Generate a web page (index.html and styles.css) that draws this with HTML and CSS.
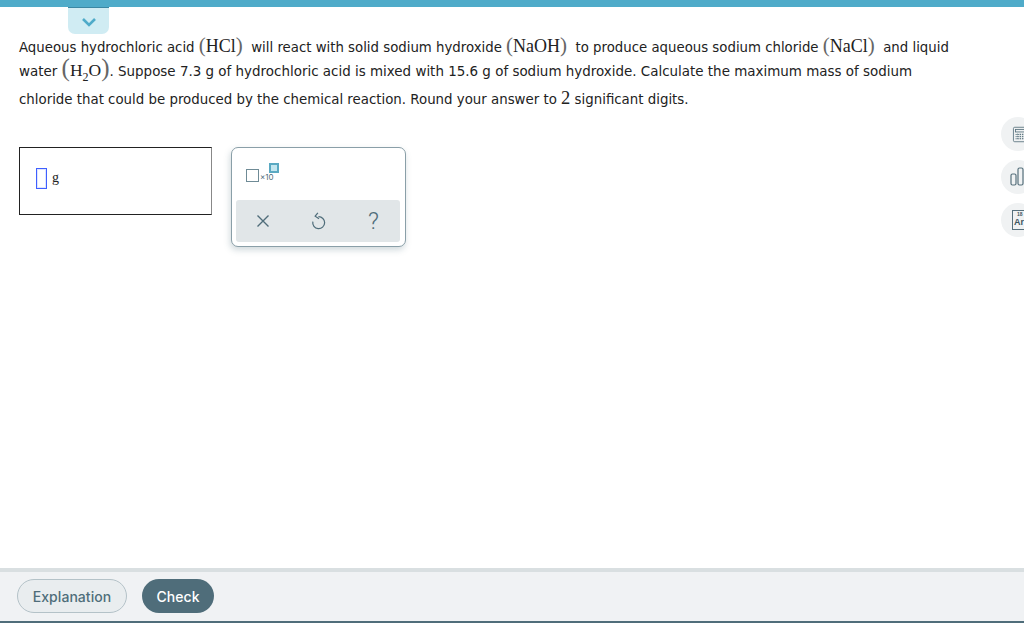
FILE: index.html
```html
<!DOCTYPE html>
<html>
<head>
    <title>Limiting reactant</title>
    <link rel="stylesheet" href="styles.css">
</head>
<body>
    <div class="topbar"></div>
    <div class="tab">
        <svg width="16" height="10" viewBox="0 0 16 10"><path d="M2 2l6 6 6-6" fill="none" stroke="#4fabc9" stroke-width="2.6"/></svg>
    </div>
    <main class="content">
        <div class="question">
            <p class="line line-one">Aqueous hydrochloric acid <span class="math paren">(</span><span class="math">HCl</span><span class="math paren">)</span> &nbsp;will react with solid sodium hydroxide <span class="math paren">(</span><span class="math">NaOH</span><span class="math paren">)</span> &nbsp;to produce aqueous sodium chloride <span class="math paren">(</span><span class="math">NaCl</span><span class="math paren">)</span> &nbsp;and liquid</p>
            <p class="line line-two">water <span class="math paren big">(</span><span class="math">H<sub>2</sub>O</span><span class="math paren big">)</span>. Suppose 7.3 g of hydrochloric acid is mixed with 15.6 g of sodium hydroxide. Calculate the maximum mass of sodium</p>
            <p class="line line-three">chloride that could be produced by the chemical reaction. Round your answer to <span class="math">2</span> significant digits.</p>
        </div>
        <div class="workspace">
            <div class="answer">
                <span class="cursor"></span>
                <span class="unit">g</span>
            </div>
            <div class="palette">
                <div class="palette-top">
                    <span class="box"></span>
                    <span class="times">×10</span>
                    <span class="exp"></span>
                </div>
                <div class="palette-actions">
                    <svg width="14" height="14" viewBox="0 0 14 14"><path d="M1.5 1.5l11 11M12.5 1.5l-11 11" fill="none" stroke="#4f6d7a" stroke-width="1.4"/></svg>
                    <svg width="16" height="18" viewBox="0 0 14 16"><path d="M6.500 4.200a5.300 5.300 0 1 1-5 4.400M6 .8L3.600 3.700 7 6" fill="none" stroke="#4f6d7a" stroke-width="1.1"/></svg>
                    <span class="help">?</span>
                </div>
            </div>
        </div>
    </main>
    <div class="tools">
        <div class="tool">
            <svg width="19" height="17" viewBox="0 0 22 20"><g fill="none" stroke="#56707c"><rect x="1.5" y="1.5" width="19" height="17" rx="1.5"/><rect x="4" y="4" width="14" height="3"/><path d="M4 10h14M4 12.500h14M4 15h14M6.500 9v7M9.500 9v7M12.500 9v7M15.500 9v7" stroke-dasharray="1.500 1"/></g></svg>
        </div>
        <div class="tool tool-chart">
            <svg width="22" height="20" viewBox="0 0 22 20"><g fill="none" stroke="#56707c" stroke-width="1.200"><rect x="1" y="7" width="5" height="11" rx="1.500"/><rect x="8" y="1" width="5" height="17" rx="1.500"/><rect x="15" y="10" width="5" height="8" rx="1.500"/></g></svg>
        </div>
        <div class="tool">
            <div class="element"><span class="element-top">18</span>Ar</div>
        </div>
    </div>
    <footer class="footer">
        <button class="btn btn-light">Explanation</button>
        <button class="btn btn-dark">Check</button>
    </footer>
</body>
</html>
```
FILE: styles.css
```css
html, body {
    height: 100%;
}

body {
    margin: 0;
    height: 623px;
    overflow: hidden;
    display: flex;
    flex-direction: column;
    position: relative;
    background: white;
    font-family: "DejaVu Sans", Verdana, sans-serif;
    font-size: 13.3px;
    color: #222;
}

.topbar {
    height: 7px;
    background: #4fabc9;
    flex-shrink: 0;
}

.tab {
    position: absolute;
    top: 7px;
    left: 68px;
    width: 41px;
    height: 27px;
    background: #d0ecf3;
    border-top: 1px solid #3b87a3;
    border-radius: 0 0 7px 7px;
    box-sizing: border-box;
    text-align: center;
    padding-top: 9px;
}

.tab svg {
    display: block;
    margin: 0 auto;
}

.content {
    flex: 1;
    padding: 29px 0 0 19px;
}

.question {
    width: 960px;
}

.line {
    margin: 0;
    white-space: nowrap;
}

.line-one {
    height: 24px;
    line-height: 23px;
}

.line-two {
    height: 28px;
    line-height: 23px;
    font-size: 13.45px;
}

.line-three {
    height: 25px;
    line-height: 23px;
    font-size: 13.35px;
}

.math {
    font-family: "Liberation Serif", "Times New Roman", serif;
    font-size: 18px;
    line-height: 0;
    color: #222;
}

.line-two .math {
    font-size: 17.5px;
}

.line-three .math {
    font-size: 18.5px;
}

.math sub {
    font-size: 12px;
    line-height: 0;
}

.paren {
    font-size: 21px;
    font-weight: 400;
    color: #666;
}

.line-two .paren.big {
    font-size: 25px;
}

.workspace {
    display: flex;
    align-items: flex-start;
    gap: 19px;
    margin-top: 34px;
}

.answer {
    width: 193px;
    height: 68px;
    box-sizing: border-box;
    border: 1px solid #222;
    border-right-color: #888;
    display: flex;
    align-items: center;
    padding: 0 0 6px 16px;
    gap: 5px;
}

.cursor {
    width: 9px;
    height: 19px;
    border: 1px solid #3f5fff;
    outline: 1px solid #dfe5ff;
    outline-offset: -2px;
}

.unit {
    font-family: "Liberation Serif", serif;
    font-size: 14px;
}

.palette {
    width: 175px;
    height: 100px;
    box-sizing: border-box;
    border: 1px solid #8a9fa8;
    border-radius: 7px;
    background: white;
    box-shadow: -1px 3px 6px rgba(100, 130, 140, 0.3);
    padding: 0 5px 4px 4px;
    display: flex;
    flex-direction: column;
    justify-content: space-between;
}

.palette-top {
    position: relative;
    height: 50px;
}

.box {
    position: absolute;
    left: 10px;
    top: 21px;
    width: 11px;
    height: 11px;
    border: 1px solid #6f8b96;
}

.times {
    position: absolute;
    left: 24px;
    top: 24px;
    font-family: "Inter", sans-serif;
    font-size: 8px;
    color: #4f6d7a;
}

.exp {
    position: absolute;
    left: 33px;
    top: 15px;
    width: 6px;
    height: 6px;
    background: #c3e6ef;
    border: 2px solid #5aa9c2;
}

.palette-actions {
    height: 42px;
    background: #e1e6e8;
    border-radius: 3px;
    display: flex;
    align-items: center;
    justify-content: space-between;
    padding: 0 21px 0 20px;
}

.help {
    font-family: "Roboto", sans-serif;
    font-size: 24px;
    color: #4f6d7a;
    font-weight: 300;
}

.tools {
    position: absolute;
    top: 117px;
    left: 1001px;
    width: 34px;
    display: flex;
    flex-direction: column;
    gap: 9px;
}

.tool {
    width: 34px;
    height: 34px;
    box-sizing: border-box;
    padding-left: 11px;
    border-radius: 50%;
    background: #f0f2f3;
    display: flex;
    align-items: center;
    flex-shrink: 0;
}

.tool svg {
    flex-shrink: 0;
}

.tool-chart {
    padding-left: 9px;
}

.element {
    width: 20px;
    height: 20px;
    flex-shrink: 0;
    box-sizing: border-box;
    border: 1px solid #56707c;
    padding-left: 1px;
    font-family: "Liberation Sans", sans-serif;
    font-size: 9px;
    line-height: 9px;
    color: #3d5560;
    font-weight: bold;
}

.element-top {
    display: block;
    font-size: 5px;
    line-height: 7px;
    padding-left: 3px;
}

.footer {
    height: 55px;
    flex-shrink: 0;
    box-sizing: border-box;
    background: #f0f2f4;
    border-top: 4px solid #d9dfe1;
    border-bottom: 2px solid #4f6d7a;
    display: flex;
    align-items: center;
    gap: 15px;
    padding: 0 0 1px 17px;
}

.btn {
    height: 34px;
    border-radius: 17px;
    font-family: "Inter", sans-serif;
    font-size: 14px;
    font-weight: 500;
    letter-spacing: 0.05px;
    padding: 0;
}

.btn-light {
    width: 110px;
    background: #e9edef;
    border: 1px solid #b4c2c8;
    color: #4f6d7a;
}

.btn-dark {
    width: 72px;
    background: #4f6d7a;
    border: none;
    color: white;
}
```
